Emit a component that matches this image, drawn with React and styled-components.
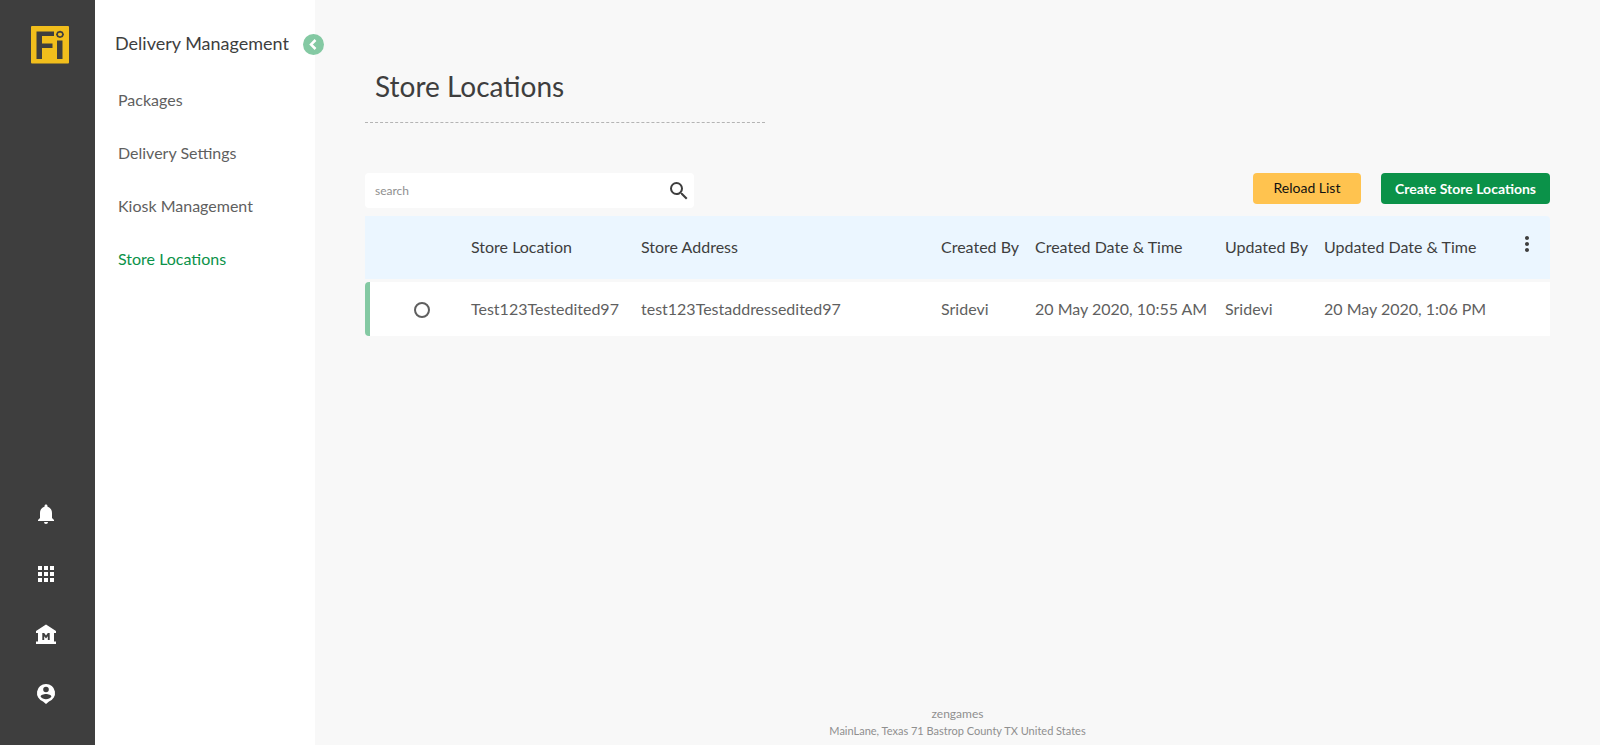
import React from "react";
import styled, { createGlobalStyle } from "styled-components";
import { MdNotifications, MdApps, MdSearch, MdMoreVert } from "react-icons/md";

const GlobalStyle = createGlobalStyle`
  *, *::before, *::after { box-sizing: border-box; }
  body {
    margin: 0;
    background: #f8f8f8;
    color: #3e3e3e;
    font-family: Lato, "Open Sans", sans-serif;
    font-size: 16px;
  }
  button, input { font-family: inherit; }
`;

const Page = styled.div`
  display: flex;
  min-height: 100vh;
`;

const Rail = styled.nav`
  flex: 0 0 95px;
  display: flex;
  flex-direction: column;
  justify-content: space-between;
  padding: 24px 0 39px;
  background: #3e3e3e;
`;

const LogoLink = styled.a`
  display: block;
  width: 40px;
  height: 40px;
  margin-left: 30px;
`;

const RailList = styled.div`
  display: flex;
  flex-direction: column;
  gap: 36px;
  padding-left: 34px;
`;

const RailButton = styled.button`
  display: flex;
  width: 24px;
  height: 24px;
  padding: 0;
  border: 0;
  background: none;
  color: #fff;
  cursor: pointer;
`;

const Panel = styled.aside`
  flex: 0 0 220px;
  padding-top: 31px;
  background: #fff;
`;

const PanelHeader = styled.div`
  position: relative;
  display: flex;
  align-items: center;
  height: 24px;
  padding-left: 20px;
`;

const PanelTitle = styled.h2`
  margin: 0;
  font-size: 18px;
  line-height: 24px;
  font-weight: 400;
`;

const CollapseButton = styled.button`
  position: absolute;
  top: 3px;
  right: -9px;
  display: flex;
  align-items: center;
  justify-content: center;
  width: 21px;
  height: 21px;
  padding: 0;
  border: 0;
  border-radius: 50%;
  background: #84c9a3;
  color: #fff;
  cursor: pointer;
`;

const Menu = styled.div`
  display: flex;
  flex-direction: column;
  gap: 29px;
  margin-top: 33px;
  padding-left: 23px;
`;

const MenuLink = styled.a`
  color: ${({ $active }) => ($active ? "#0b9249" : "#5f5f5f")};
  line-height: 24px;
  text-decoration: none;
`;

const Main = styled.main`
  flex: 1;
  min-width: 0;
  display: flex;
  flex-direction: column;
  padding: 66px 50px 6px;
`;

const Title = styled.h1`
  width: 400px;
  margin: 0;
  padding: 0 10px 16px;
  border-bottom: 1px dashed #b4b4b4;
  font-size: 28px;
  line-height: 40px;
  font-weight: 400;
`;

const Toolbar = styled.div`
  display: flex;
  align-items: flex-start;
  gap: 20px;
  margin-top: 50px;
`;

const SearchBox = styled.form`
  display: flex;
  align-items: center;
  width: 329px;
  height: 35px;
  margin-right: auto;
  padding: 0 3px 0 10px;
  border-radius: 4px;
  background: #fff;
`;

const SearchInput = styled.input`
  flex: 1;
  min-width: 0;
  padding: 0;
  border: 0;
  outline: 0;
  background: none;
  color: #3e3e3e;
  font-size: 12px;
  &::placeholder { color: #8f8f8f; }
`;

const IconButton = styled.button`
  display: inline-flex;
  padding: 0;
  border: 0;
  background: none;
  color: #3e3e3e;
  cursor: pointer;
`;

const ActionButton = styled.button`
  min-width: 108px;
  height: 31px;
  padding: ${({ $primary }) => ($primary ? "0 14px" : "0 20px 2px")};
  border: 0;
  border-radius: 4px;
  background: ${({ $primary }) => ($primary ? "#0b9249" : "#ffc34f")};
  color: ${({ $primary }) => ($primary ? "#fff" : "#111")};
  font-size: 14px;
  font-weight: ${({ $primary }) => ($primary ? 700 : 400)};
  cursor: pointer;
`;

const Table = styled.table`
  width: 100%;
  margin-top: 8px;
  border-collapse: separate;
  border-spacing: 0;
  table-layout: fixed;
  font-variant-ligatures: none;
`;

const Column = styled.col`
  width: ${({ $width }) => $width};
`;

const HeadCell = styled.th`
  height: 66px;
  padding: 0 5px 3px;
  border-bottom: 3px solid #f8f8f8;
  background: #ebf6ff;
  font-weight: 400;
  text-align: left;
  white-space: nowrap;
`;

const MenuCell = styled(HeadCell)`
  padding: 0 0 5px 4px;
  border-top-right-radius: 4px;
  text-align: center;
`;

const Cell = styled.td`
  height: 54px;
  padding: 0 5px 2px;
  background: #fff;
  color: #5f5f5f;
  white-space: nowrap;
`;

const SelectCell = styled(Cell)`
  padding: 0 0 2px 8px;
  border-left: 5px solid #84c9a3;
  border-radius: 4px 0 0 4px;
  text-align: center;
`;

const Radio = styled.input`
  appearance: none;
  width: 16px;
  height: 16px;
  margin: 0;
  border: 2px solid #5f5f5f;
  border-radius: 50%;
  vertical-align: middle;
  &:checked { background: #84c9a3; }
`;

const Footer = styled.footer`
  margin-top: auto;
  color: #8f8f8f;
  font-size: 12px;
  line-height: 17px;
  text-align: center;
`;

const Address = styled.div`
  font-size: 11px;
`;

const Logo = () => (
  <svg width="40" height="40" viewBox="0 0 40 40" aria-hidden="true">
    <rect x="1" y="2" width="38" height="37.5" rx="1" fill="#f1be1c" />
    <path d="M6.500 7.500h17.500V12H12v7.500h10.500V24H12v11H6.500z" fill="#3e3e3e" />
    <rect x="27" y="16.500" width="5.500" height="18.500" fill="#3e3e3e" />
    <path d="M30 7.600l2.200.8.900 2-.9 2-2.200.8-2.200-.8-.9-2 .9-2z" fill="#f1be1c" stroke="#3e3e3e" strokeWidth="1.700" />
  </svg>
);

const House = () => (
  <svg width="24" height="24" viewBox="0 0 24 24" fill="currentColor" aria-hidden="true">
    <path
      fillRule="evenodd"
      d="M12 2.500L22 9v2h-2v8.500h2V22H2v-2.500h2V11H2V9zM8.300 11v7h1.900v-3.700L12 16.500l1.800-2.200V18h1.900v-7h-1.900L12 13.500 10.200 11z"
    />
  </svg>
);

const PersonPin = () => (
  <svg width="24" height="24" viewBox="0 0 24 24" fill="currentColor" aria-hidden="true">
    <path
      fillRule="evenodd"
      d="M12 2a9 9 0 0 0-3 17.500L12 22l3-2.500A9 9 0 0 0 12 2zm0 2.700a2.800 2.800 0 1 1 0 5.600 2.800 2.800 0 0 1 0-5.600zm0 7.200c2.400 0 5.400 1 5.400 2.600-1.100 1.700-3.200 2.700-5.400 2.700s-4.300-1-5.400-2.700c0-1.600 3-2.600 5.400-2.600z"
    />
  </svg>
);

const ChevronLeft = () => (
  <svg width="21" height="21" viewBox="0 0 21 21" fill="none" stroke="currentColor" strokeWidth="2.500" aria-hidden="true">
    <path d="M12.500 6L8 10.500l4.500 4.500" />
  </svg>
);

const railItems = [
  { label: "Notifications", icon: <MdNotifications size={24} /> },
  { label: "Apps", icon: <MdApps size={24} /> },
  { label: "Property", icon: <House /> },
  { label: "Account", icon: <PersonPin /> },
];

const menuItems = ["Packages", "Delivery Settings", "Kiosk Management", "Store Locations"];

const columns = [
  { label: "", width: "101px" },
  { label: "Store Location", width: "170px" },
  { label: "Store Address" },
  { label: "Created By", width: "94px" },
  { label: "Created Date & Time", width: "190px" },
  { label: "Updated By", width: "99px" },
  { label: "Updated Date & Time", width: "181px" },
];

const rows = [
  ["Test123Testedited97", "test123Testaddressedited97", "Sridevi", "20 May 2020, 10:55 AM", "Sridevi", "20 May 2020, 1:06 PM"],
];

export default function App() {
  return (
    <>
      <GlobalStyle />
      <Page>
        <Rail>
          <LogoLink href="#" aria-label="Home"><Logo /></LogoLink>
          <RailList>
            {railItems.map(({ label, icon }) => (
              <RailButton key={label} type="button" aria-label={label}>{icon}</RailButton>
            ))}
          </RailList>
        </Rail>
        <Panel>
          <PanelHeader>
            <PanelTitle>Delivery Management</PanelTitle>
            <CollapseButton type="button" aria-label="Collapse menu"><ChevronLeft /></CollapseButton>
          </PanelHeader>
          <Menu>
            {menuItems.map((item) => (
              <MenuLink key={item} href="#" $active={item === "Store Locations"}>{item}</MenuLink>
            ))}
          </Menu>
        </Panel>
        <Main>
          <Title>Store Locations</Title>
          <Toolbar>
            <SearchBox onSubmit={(event) => event.preventDefault()}>
              <SearchInput type="text" placeholder="search" aria-label="search" />
              <IconButton type="submit" aria-label="Submit search"><MdSearch size={24} /></IconButton>
            </SearchBox>
            <ActionButton type="button">Reload List</ActionButton>
            <ActionButton type="button" $primary>Create Store Locations</ActionButton>
          </Toolbar>
          <Table>
            <colgroup>
              {columns.map(({ label, width }) => <Column key={label} $width={width} />)}
              <Column $width="50px" />
            </colgroup>
            <thead>
              <tr>
                {columns.map(({ label }) => <HeadCell key={label} scope="col">{label}</HeadCell>)}
                <MenuCell>
                  <IconButton type="button" aria-label="Table options"><MdMoreVert size={24} /></IconButton>
                </MenuCell>
              </tr>
            </thead>
            <tbody>
              {rows.map((row) => (
                <tr key={row[0]}>
                  <SelectCell><Radio type="radio" name="store" aria-label={row[0]} /></SelectCell>
                  {row.map((value, index) => <Cell key={index}>{value}</Cell>)}
                  <Cell />
                </tr>
              ))}
            </tbody>
          </Table>
          <Footer>
            <div>zengames</div>
            <Address>MainLane, Texas 71 Bastrop County TX United States</Address>
          </Footer>
        </Main>
      </Page>
    </>
  );
}
